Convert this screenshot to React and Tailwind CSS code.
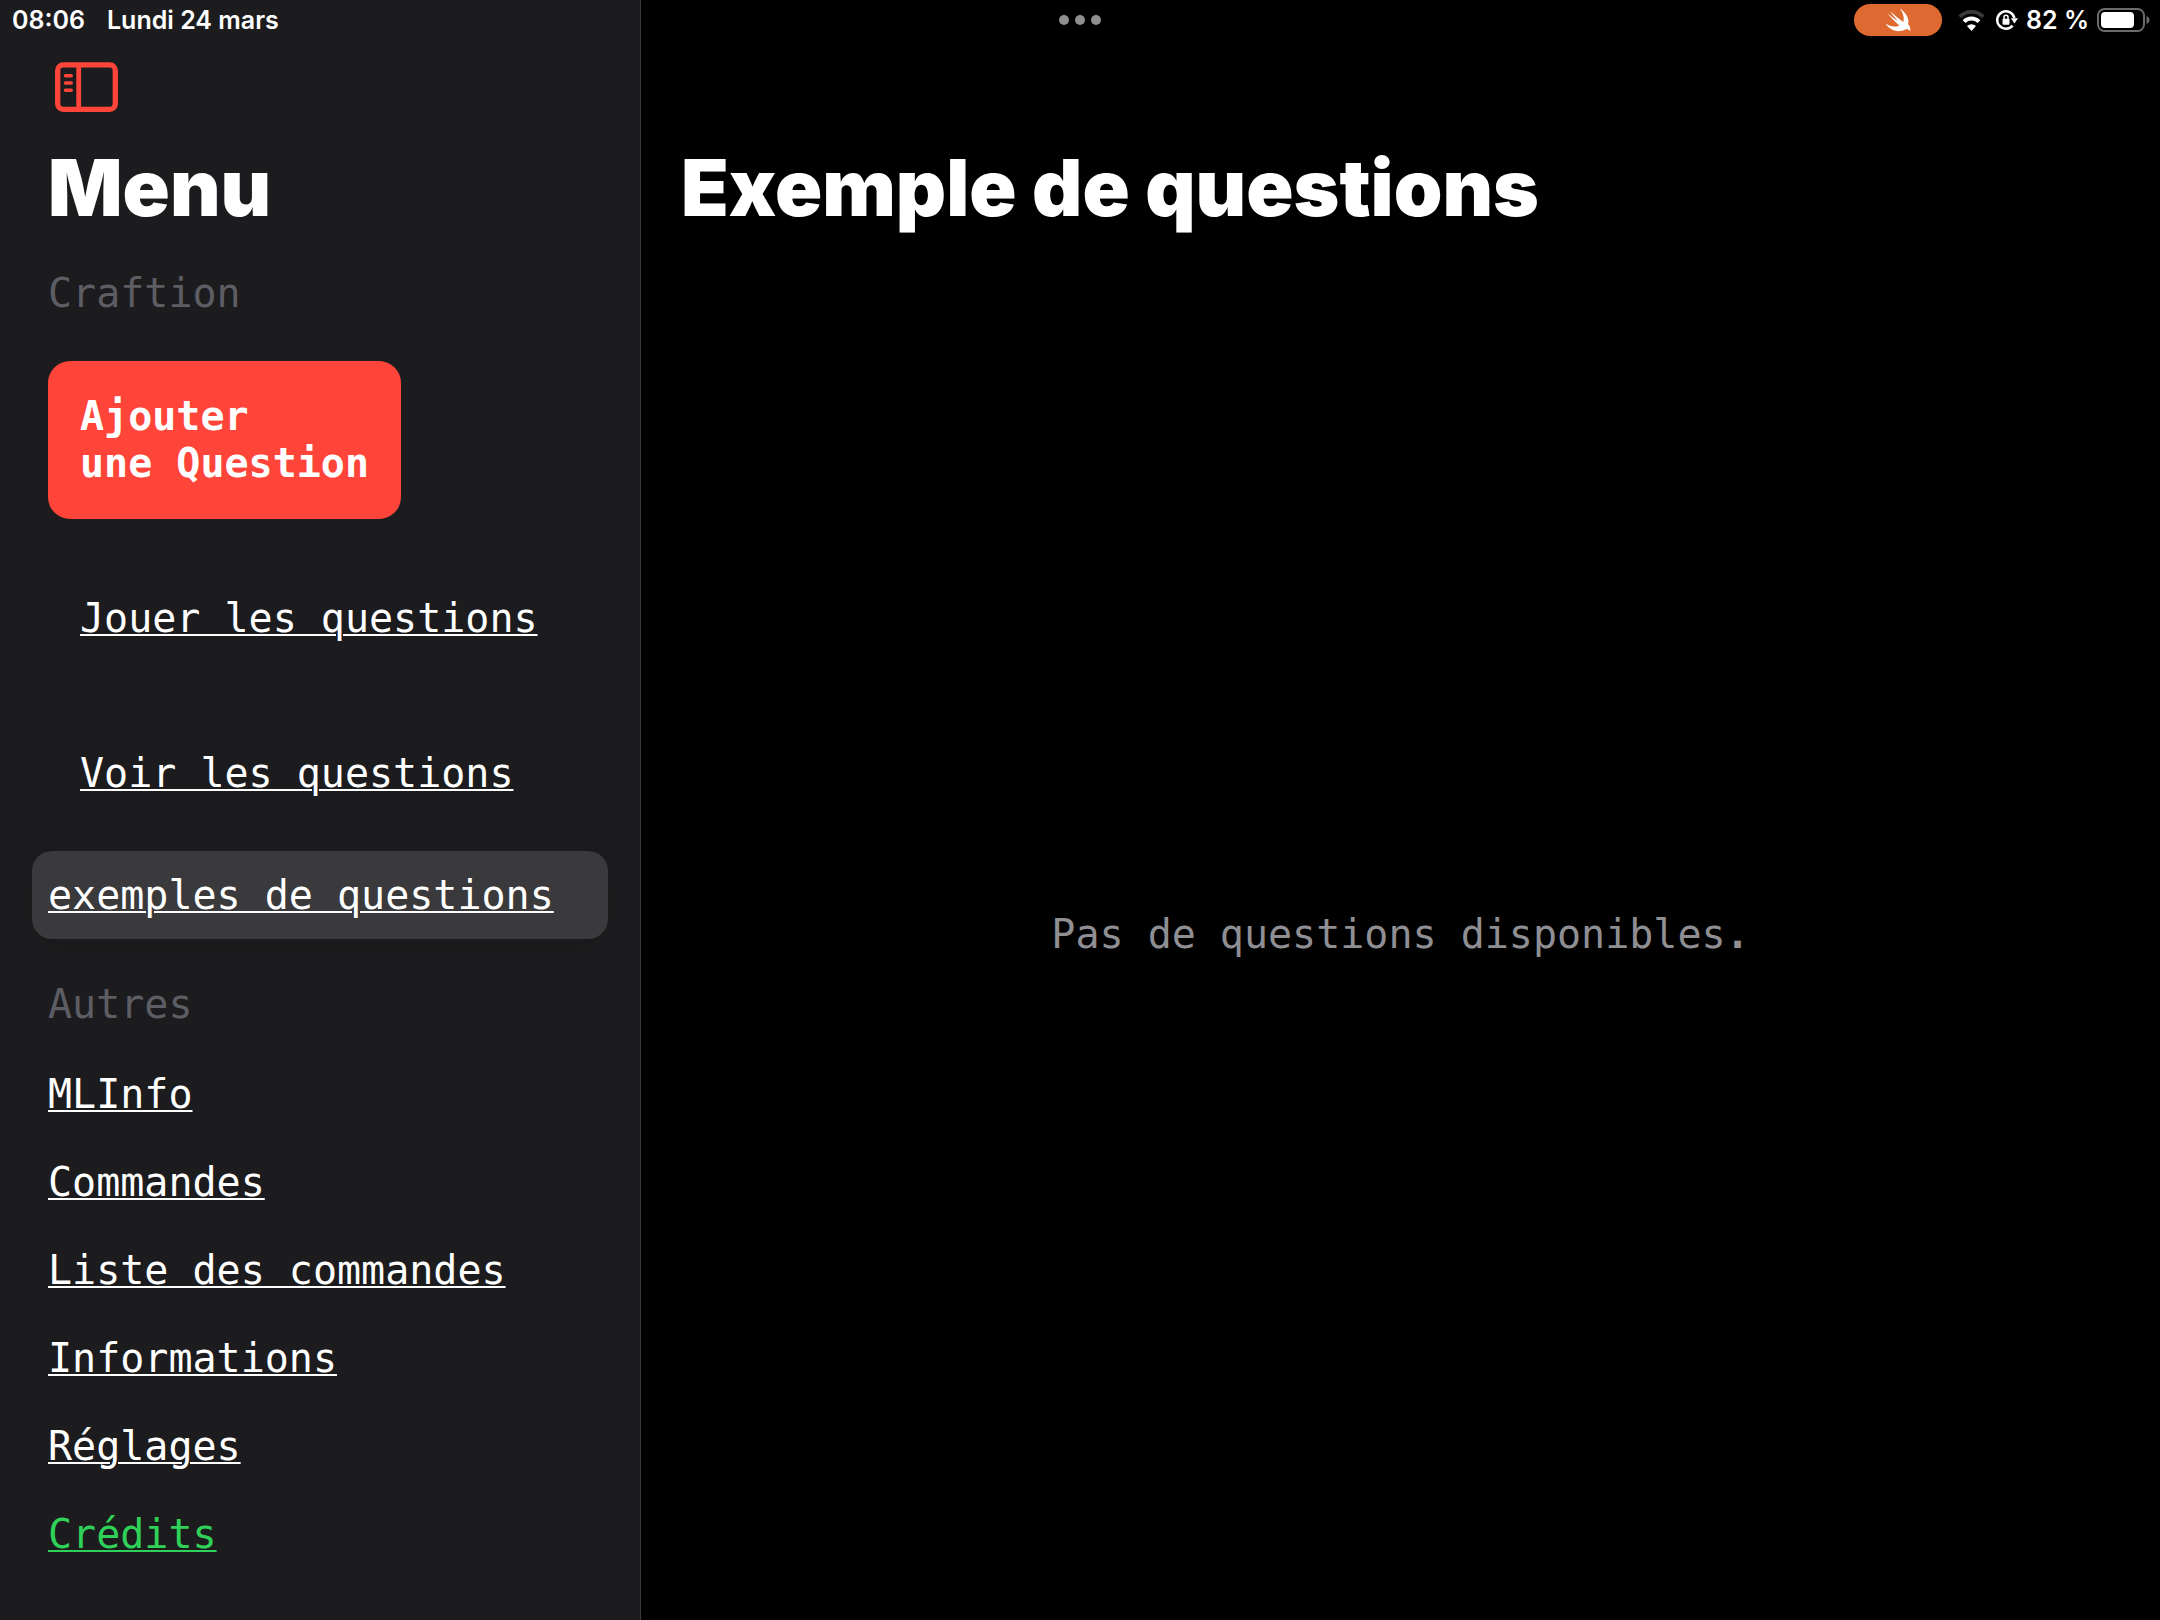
const mono = "font-['DejaVu_Sans_Mono',monospace] text-[40px] leading-[47px]";
const underline = "underline decoration-2 underline-offset-2";

const others = ["MLInfo", "Commandes", "Liste des commandes", "Informations", "Réglages"];

function SwiftBird() {
  return (
    <svg width="26" height="24" viewBox="0 0 26 24" fill="#fff" aria-hidden="true">
      <path d="M14.8 0.5C21 4.6 24.6 10.600 23.100 16.100C25.700 19.200 25.600 22.300 25.200 23.200C23.500 20.500 21.300 21.100 19.600 21.700C12.800 25.100 4.800 22.200 0.400 15.600C4.900 18.700 10.300 19.500 14.400 17.400C9.700 13.900 5.600 9.400 2.800 5.300C6.200 8.500 9.800 11.300 12.900 13.200C9.800 9.900 7.100 6.300 5.200 3.100C9.400 7.300 14 11.200 18.300 13.900C19.500 9.800 18.100 4.700 14.800 0.500Z" />
    </svg>
  );
}

function Wifi() {
  return (
    <svg width="27" height="21" viewBox="0 0 27 21" fill="none" stroke="#fff" aria-hidden="true">
      <path d="M1.700 6.800A16.500 16.500 0 0 1 25.300 6.800" stroke="#3a3a3a" strokeWidth="3.600" />
      <path d="M6.100 11.700A10.400 10.400 0 0 1 20.900 11.700" strokeWidth="4" />
      <path d="M13.500 21L9 16.100A6.500 6.500 0 0 1 18 16.100Z" fill="#fff" stroke="none" />
    </svg>
  );
}

function RotationLock() {
  return (
    <svg width="22" height="20" viewBox="0 0 22 20" fill="none" stroke="#fff" aria-hidden="true">
      <path d="M16.600 15.600A8.700 8.700 0 1 1 18.400 8" strokeWidth="2.500" />
      <path d="M14.800 8.300H21.900L18.500 13.500Z" fill="#fff" stroke="none" />
      <rect x="6.500" y="8.700" width="7" height="6" rx="1" fill="#fff" stroke="none" />
      <path d="M8 9.500V7.300A2 2 0 0 1 12 7.300V9.500" strokeWidth="1.500" />
    </svg>
  );
}

function Battery() {
  return (
    <svg width="53" height="24" viewBox="0 0 53 24" aria-hidden="true">
      <rect x="1" y="1" width="46" height="22" rx="6.500" fill="none" stroke="#6b6b6b" strokeWidth="2" />
      <rect x="4" y="4" width="33" height="16" rx="4" fill="#fff" />
      <path d="M49.500 8C51.300 8.700 52.500 10.200 52.500 12S51.300 15.300 49.500 16Z" fill="#6b6b6b" />
    </svg>
  );
}

function SidebarIcon() {
  return (
    <svg width="63" height="50" viewBox="0 0 63 50" fill="none" stroke="#ff453a" aria-hidden="true">
      <rect x="2.700" y="2.900" width="57.600" height="44.400" rx="5.500" strokeWidth="5.300" />
      <path d="M23.700 3V47" strokeWidth="4.800" />
      <path d="M10.500 13.700H16.200M10.500 21H16.200M10.500 28.300H16.200" strokeWidth="3.600" strokeLinecap="round" />
    </svg>
  );
}

function StatusBar() {
  return (
    <header className="absolute inset-x-0 top-0 grid h-10 grid-cols-[1fr_auto_1fr] items-center text-[25px] leading-10 font-semibold">
      <div className="flex items-center gap-[22px] pl-3">
        <span>08:06</span>
        <span>Lundi 24 mars</span>
      </div>
      <button type="button" aria-label="Multitâche" className="flex gap-[6px]">
        <span className="size-[10px] rounded-full bg-[#8e8e8e]" />
        <span className="size-[10px] rounded-full bg-[#8e8e8e]" />
        <span className="size-[10px] rounded-full bg-[#8e8e8e]" />
      </button>
      <div className="flex items-center justify-end pr-[10px]">
        <span className="mr-4 flex h-8 w-[88px] items-center justify-center rounded-full bg-[#de6a31]">
          <SwiftBird />
        </span>
        <Wifi />
        <span className="ml-[11px]"><RotationLock /></span>
        <span className="mx-2">82 %</span>
        <Battery />
      </div>
    </header>
  );
}

export default function App() {
  return (
    <div className="relative flex min-h-screen bg-black font-['Inter',sans-serif] text-white">
      <StatusBar />
      <aside className="w-[641px] shrink-0 border-r border-[#3a3a3c] bg-[#1c1c1e] pt-10">
        <button type="button" aria-label="Masquer le menu" className="mt-[22px] ml-[55px] block">
          <SidebarIcon />
        </button>
        <h1 className="mt-[28px] ml-12 text-[78px] leading-[96px] font-black">Menu</h1>
        <nav className="flex flex-col px-8">
          <h2 className={`${mono} mt-[34px] px-4 text-[#5d5d64]`}>Craftion</h2>
          <button
            type="button"
            className={`${mono} mt-[44px] ml-4 w-[353px] rounded-[22px] bg-[#ff453a] py-8 pl-8 text-left font-bold whitespace-nowrap`}
          >
            Ajouter
            <br />
            une Question
          </button>
          <a href="#jouer" className={`${mono} ${underline} mt-[76px] px-12`}>Jouer les questions</a>
          <a href="#voir" className={`${mono} ${underline} mt-[108px] px-12`}>Voir les questions</a>
          <a
            href="#exemples"
            aria-current="page"
            className={`${mono} ${underline} mt-[54px] rounded-[20px] bg-[#3a3a3c] px-4 pt-[21px] pb-5 shadow-[0_10px_30px_rgba(0,0,0,0.08)]`}
          >
            exemples de questions
          </a>
          <h2 className={`${mono} mt-[42px] mb-[43px] px-4 text-[#5d5d64]`}>Autres</h2>
          <div className="flex flex-col gap-[41px] px-4">
            {others.map((label) => (
              <a key={label} href={`#${label}`} className={`${mono} ${underline}`}>{label}</a>
            ))}
            <a href="#credits" className={`${mono} ${underline} text-[#30d158]`}>Crédits</a>
          </div>
        </nav>
      </aside>
      <main className="flex min-w-0 flex-1 flex-col pt-10">
        <h1 className="mt-[100px] ml-10 text-[78px] leading-[96px] font-black">Exemple de questions</h1>
        <p className={`${mono} mt-[675px] text-center text-[#8e8e93]`}>
          Pas de questions disponibles<span className="font-bold">.</span>
        </p>
      </main>
    </div>
  );
}
